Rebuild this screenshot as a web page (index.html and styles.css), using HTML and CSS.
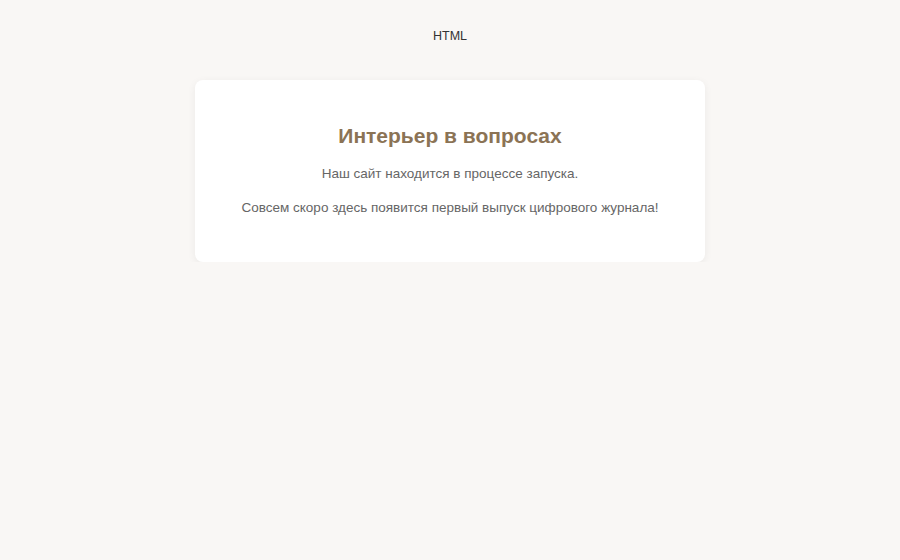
FILE: index.html
```html
<!DOCTYPE html>
<html lang="ru">
<head>
<meta charset="utf-8">
<title>Интерьер в вопросах</title>
<link rel="stylesheet" href="styles.css">
</head>
<body>
<div class="page">
  <div class="label">HTML</div>
  <main class="card">
    <h1 class="title">Интерьер в вопросах</h1>
    <p class="text">Наш сайт находится в процессе запуска.</p>
    <p class="text">Совсем скоро здесь появится первый выпуск цифрового журнала!</p>
  </main>
</div>
</body>
</html>
```
FILE: styles.css
```css
html, body {
  margin: 0;
  padding: 0;
  background: #f9f7f5;
  font-family: "Liberation Sans", Arial, sans-serif;
}
.page {
  display: flex;
  flex-direction: column;
  align-items: center;
  padding-top: 26px;
}
.label {
  font-size: 12.5px;
  line-height: 20px;
  color: #333;
}
.card {
  box-sizing: border-box;
  width: 510px;
  margin-top: 34px;
  background: #fff;
  border-radius: 8px;
  box-shadow: 0 2px 8px rgba(0, 0, 0, 0.06);
  padding: 39px 30px 44px;
  text-align: center;
}
.title {
  margin: 0 0 11px;
  font-size: 21px;
  line-height: 33px;
  font-weight: bold;
  color: #8b7355;
}
.text {
  margin: 0 0 13px;
  font-size: 13.5px;
  line-height: 21px;
  color: #666;
}
.text:last-child {
  margin-bottom: 0;
}
```
